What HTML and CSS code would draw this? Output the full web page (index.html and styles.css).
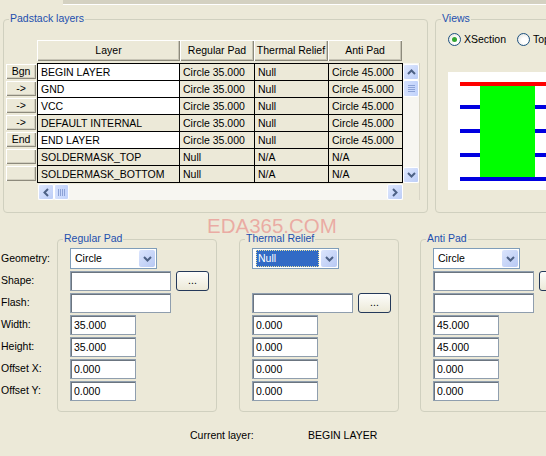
FILE: index.html
```html
<!DOCTYPE html>
<html>
<head>
<meta charset="utf-8">
<link rel="stylesheet" href="styles.css">
</head>
<body>
<div class="topline"></div>
<div class="top">
  <div class="group padstack">
    <div class="gtitle">Padstack layers</div>
    <div class="headers">
      <div class="hdr h-layer">Layer</div>
      <div class="hdr h-col">Regular Pad</div>
      <div class="hdr h-col">Thermal Relief</div>
      <div class="hdr h-col">Anti Pad</div>
    </div>
    <div class="tbody">
      <div class="rowbtns">
        <div class="rbtn">Bgn</div>
        <div class="rbtn">-&gt;</div>
        <div class="rbtn">-&gt;</div>
        <div class="rbtn">-&gt;</div>
        <div class="rbtn">End</div>
        <div class="rbtn"></div>
        <div class="rbtn"></div>
      </div>
      <div class="frame">
        <div class="frame-main">
          <div class="grid">
            <div class="c edit">BEGIN LAYER</div><div class="c">Circle 35.000</div><div class="c">Null</div><div class="c">Circle 45.000</div>
            <div class="c edit">GND</div><div class="c">Circle 35.000</div><div class="c">Null</div><div class="c">Circle 45.000</div>
            <div class="c edit">VCC</div><div class="c">Circle 35.000</div><div class="c">Null</div><div class="c">Circle 45.000</div>
            <div class="c">DEFAULT INTERNAL</div><div class="c">Circle 35.000</div><div class="c">Null</div><div class="c">Circle 45.000</div>
            <div class="c edit">END LAYER</div><div class="c">Circle 35.000</div><div class="c">Null</div><div class="c">Circle 45.000</div>
            <div class="c">SOLDERMASK_TOP</div><div class="c">Null</div><div class="c">N/A</div><div class="c">N/A</div>
            <div class="c">SOLDERMASK_BOTTOM</div><div class="c">Null</div><div class="c">N/A</div><div class="c">N/A</div>
          </div>
          <div class="vscroll">
            <div class="sbtn"><svg width="9" height="6" viewBox="0 0 9 6"><path d="M1 5 L4.5 1.5 L8 5" fill="none" stroke="#4d6185" stroke-width="2"/></svg></div>
            <div class="vthumb"><span></span><span></span><span></span><span></span></div>
            <div class="vtrack"></div>
            <div class="sbtn"><svg width="9" height="6" viewBox="0 0 9 6"><path d="M1 1 L4.5 4.5 L8 1" fill="none" stroke="#4d6185" stroke-width="2"/></svg></div>
          </div>
        </div>
        <div class="hscroll">
          <div class="sbtn"><svg width="6" height="9" viewBox="0 0 6 9"><path d="M5 1 L1.5 4.5 L5 8" fill="none" stroke="#4d6185" stroke-width="2"/></svg></div>
          <div class="hthumb"><span></span><span></span><span></span><span></span></div>
          <div class="htrack"></div>
          <div class="sbtn"><svg width="6" height="9" viewBox="0 0 6 9"><path d="M1 1 L4.5 4.5 L1 8" fill="none" stroke="#4d6185" stroke-width="2"/></svg></div>
        </div>
      </div>
    </div>
  </div>
  <div class="group views">
    <div class="gtitle">Views</div>
    <div class="radios">
      <div class="radio on"><span class="dot"></span></div><span class="rlabel">XSection</span>
      <div class="radio"></div><span class="rlabel">Top</span>
    </div>
    <div class="preview">
      <svg width="120" height="118" viewBox="0 0 120 118">
        <rect x="12" y="33" width="90" height="4" fill="#0000e0"/>
        <rect x="12" y="57" width="90" height="4" fill="#0000e0"/>
        <rect x="12" y="81" width="90" height="4" fill="#0000e0"/>
        <rect x="32" y="12" width="55" height="94" fill="#00ff00"/>
        <rect x="12" y="105" width="90" height="4" fill="#0000e0"/>
        <rect x="12" y="10" width="90" height="4" fill="#ff0000"/>
      </svg>
    </div>
  </div>
</div>
<div class="watermark">EDA365.COM</div>
<div class="bottom">
  <div class="labels">
    <div class="lbl">Geometry:</div>
    <div class="lbl">Shape:</div>
    <div class="lbl">Flash:</div>
    <div class="lbl">Width:</div>
    <div class="lbl">Height:</div>
    <div class="lbl">Offset X:</div>
    <div class="lbl">Offset Y:</div>
  </div>
  <div class="group pad">
    <div class="gtitle">Regular Pad</div>
    <div class="fields">
      <div class="select"><span class="sval">Circle</span><span class="sarrow"><svg width="9" height="6" viewBox="0 0 9 6"><path d="M1 1 L4.5 4.5 L8 1" fill="none" stroke="#4d6185" stroke-width="2"/></svg></span></div>
      <div class="frow"><div class="inp long"></div><div class="dots">...</div></div>
      <div class="frow"><div class="inp long"></div></div>
      <div class="inp short">35.000</div>
      <div class="inp short">35.000</div>
      <div class="inp short">0.000</div>
      <div class="inp short">0.000</div>
    </div>
  </div>
  <div class="group pad">
    <div class="gtitle">Thermal Relief</div>
    <div class="fields">
      <div class="select"><span class="sval sel"><span class="focus">Null</span></span><span class="sarrow"><svg width="9" height="6" viewBox="0 0 9 6"><path d="M1 1 L4.5 4.5 L8 1" fill="none" stroke="#4d6185" stroke-width="2"/></svg></span></div>
      <div class="frow"></div>
      <div class="frow"><div class="inp long"></div><div class="dots">...</div></div>
      <div class="inp short">0.000</div>
      <div class="inp short">0.000</div>
      <div class="inp short">0.000</div>
      <div class="inp short">0.000</div>
    </div>
  </div>
  <div class="group pad">
    <div class="gtitle">Anti Pad</div>
    <div class="fields">
      <div class="select"><span class="sval">Circle</span><span class="sarrow"><svg width="9" height="6" viewBox="0 0 9 6"><path d="M1 1 L4.5 4.5 L8 1" fill="none" stroke="#4d6185" stroke-width="2"/></svg></span></div>
      <div class="frow"><div class="inp long"></div><div class="dots">...</div></div>
      <div class="frow"><div class="inp long"></div></div>
      <div class="inp short">45.000</div>
      <div class="inp short">45.000</div>
      <div class="inp short">0.000</div>
      <div class="inp short">0.000</div>
    </div>
  </div>
</div>
<div class="current"><span class="clabel">Current layer:</span><span>BEGIN LAYER</span></div>
</body>
</html>
```
FILE: styles.css
```css
* { box-sizing: border-box; }
html, body {
  margin: 0;
  padding: 0;
  width: 546px;
  height: 456px;
  overflow: hidden;
  background: #ece9d8;
}
body {
  position: relative;
  font-family: "Liberation Sans", Arial, sans-serif;
  font-size: 10.5px;
  color: #000;
}
.topline {
  height: 6px;
  margin-left: 63px;
  background: linear-gradient(#d4d1c1 0 4px, #ffffff 4px 5px, #ece9d8 5px 6px);
}
.top {
  display: flex;
  gap: 7px;
  margin-top: 13px;
  padding-left: 3px;
  height: 194px;
}
.group {
  border: 1px solid #d0d0bf;
  border-radius: 4px;
  flex: none;
}
.gtitle {
  width: fit-content;
  margin: -8px 0 0 5px;
  padding: 0 1px;
  height: 13px;
  line-height: 13px;
  background: #ece9d8;
  color: #1d4fae;
  white-space: nowrap;
}
.padstack { width: 425px; height: 194px; }
.headers {
  display: flex;
  margin: 15px 0 0 33px;
  height: 21px;
}
.hdr {
  height: 21px;
  line-height: 20px;
  text-align: center;
  background: #ece9d8;
  box-shadow: inset 1px 1px 0 #fff, inset -1px -1px 0 #8d8a7c, inset -2px -2px 0 #c7c4b5;
  white-space: nowrap;
}
.h-layer { width: 143px; }
.h-col { width: 74px; }
.tbody {
  display: flex;
  margin-top: 2px;
}
.rowbtns {
  width: 33px;
  flex: none;
  padding: 1px 0 0 2px;
  display: flex;
  flex-direction: column;
  gap: 2px;
}
.rbtn {
  width: 30px;
  height: 15px;
  line-height: 14px;
  text-align: center;
  background: #ece9d8;
  box-shadow: inset 1px 1px 0 #fff, inset -1px -1px 0 #8d8a7c, inset -2px -2px 0 #d2cfbf;
}
.frame {
  border-right: 1px solid #d8d5c6;
}
.frame-main { display: flex; }
.grid {
  width: 366px;
  flex: none;
  display: grid;
  grid-template-columns: 141px 74px 73px 73px;
  grid-auto-rows: 16px;
  gap: 1px;
  padding: 1px;
  background: #000;
}
.c {
  background: #ece9d8;
  padding-left: 3px;
  line-height: 16px;
  white-space: nowrap;
  overflow: hidden;
}
.c.edit { background: #fff; }
.vscroll {
  width: 16px;
  height: 120px;
  flex: none;
  padding-top: 1px;
  background: #f7f6f1;
  display: flex;
  flex-direction: column;
}
.sbtn {
  width: 16px;
  height: 16px;
  flex: none;
  display: flex;
  align-items: center;
  justify-content: center;
  border: 1px solid #fff;
  border-radius: 2px;
  background: linear-gradient(135deg, #dfe8fe, #bccdf7);
}
.vthumb, .hthumb {
  flex: none;
  border: 1px solid #fff;
  border-radius: 2px;
  background: linear-gradient(90deg, #d4e0fd, #c2d3fb);
  display: flex;
  align-items: center;
  justify-content: center;
  gap: 1px;
}
.vthumb { height: 17px; flex-direction: column; }
.vthumb span { width: 7px; height: 1px; background: #8ca2d6; }
.hthumb { width: 15px; height: 16px; }
.hthumb span { width: 1px; height: 7px; background: #8ca2d6; }
.vtrack, .htrack { flex: 1; }
.hscroll {
  display: flex;
  width: 365px;
  height: 16px;
  margin: 1px 0 0 1px;
  background: #f7f6f1;
}
.views {
  width: 140px;
  height: 194px;
}
.radios {
  display: flex;
  align-items: center;
  margin: 8px 0 0 12px;
  height: 13px;
}
.radio {
  width: 13px;
  height: 13px;
  border-radius: 50%;
  border: 1px solid #1c5180;
  background: radial-gradient(circle at 60% 60%, #fff 30%, #dcdcd6 100%);
  display: flex;
  align-items: center;
  justify-content: center;
  flex: none;
}
.radio .dot {
  width: 5px;
  height: 5px;
  border-radius: 50%;
  background: #31a531;
}
.rlabel { margin: 0 11px 0 3px; line-height: 13px; white-space: nowrap; }
.preview {
  margin: 26px 0 0 12px;
  width: 120px;
  height: 118px;
  background: #fff;
}
.preview svg { display: block; }
.watermark {
  position: absolute;
  left: 207px;
  top: 215px;
  font-size: 20.5px;
  line-height: 22px;
  color: rgba(232, 110, 110, 0.5);
  white-space: nowrap;
}
.bottom {
  display: flex;
  gap: 22px;
  margin-top: 26px;
  height: 173px;
}
.labels {
  width: 57px;
  flex: none;
  margin-right: -22px;
  padding: 9px 0 0 1px;
  display: flex;
  flex-direction: column;
  gap: 2px;
}
.lbl { height: 20px; line-height: 20px; white-space: nowrap; }
.pad { width: 160px; height: 173px; }
.pad:nth-child(4) { margin-left: -1px; }
.fields {
  margin: 3px 0 0 12px;
  display: flex;
  flex-direction: column;
  gap: 2px;
}
.frow { display: flex; height: 20px; gap: 5px; }
.inp {
  height: 20px;
  flex: none;
  line-height: 18px;
  padding-left: 3px;
  background: #fff;
  border: 1px solid #8f9eae;
  box-shadow: inset 1px 1px 0 #6b7580;
  white-space: nowrap;
}
.long { width: 101px; }
.short { width: 66px; }
.dots {
  width: 33px;
  flex: none;
  height: 20px;
  line-height: 16px;
  text-align: center;
  border: 1px solid #24395a;
  border-radius: 3px;
  background: linear-gradient(#fdfdfb, #ece9d8);
}
.select {
  width: 87px;
  height: 21px;
  border: 1px solid #7f9db9;
  background: #fff;
  display: flex;
  align-items: center;
  padding: 1px;
}
.sval {
  flex: 1;
  height: 17px;
  line-height: 17px;
  padding-left: 3px;
}
.sval.sel {
  background: #316ac5;
  color: #fff;
  padding: 0;
  margin-left: 2px;
  margin-right: 2px;
}
.focus {
  display: block;
  height: 17px;
  line-height: 15px;
  padding-left: 1px;
  border: 1px dotted #e8e2a0;
}
.sarrow {
  width: 16px;
  height: 17px;
  display: flex;
  align-items: center;
  justify-content: center;
  background: linear-gradient(135deg, #dbe5fd, #b7c8f3);
  border-radius: 2px;
}
.current {
  display: flex;
  margin-top: 17px;
  padding-left: 190px;
  line-height: 13px;
  white-space: nowrap;
}
.clabel { width: 118px; }
```
